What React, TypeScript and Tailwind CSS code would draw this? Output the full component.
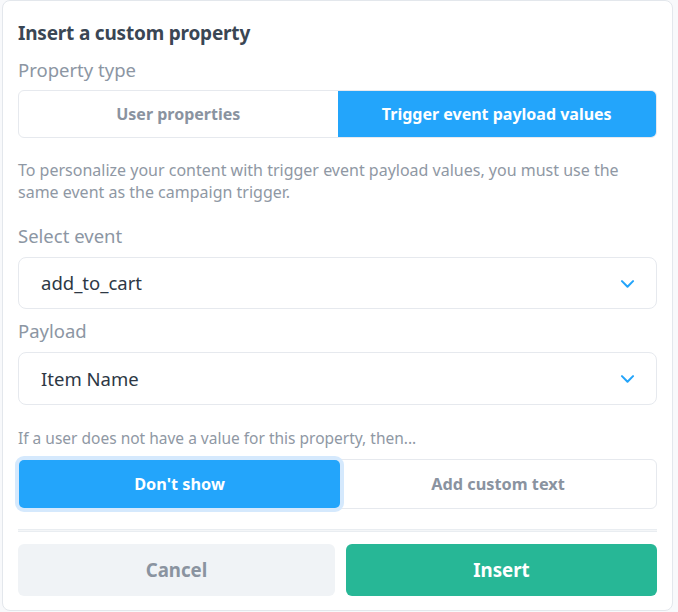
import React from "react";

const Chevron = () => (
  <svg width="19" height="19" viewBox="0 0 24 24" fill="none" stroke="#23a4fa" strokeWidth="2.6" strokeLinecap="round" strokeLinejoin="round">
    <path d="M5 9l7 7 7-7" />
  </svg>
);

export default function App() {
  return (
    <div
      className="w-[678px] h-[612px] bg-[#f8f9fb] overflow-hidden"
      style={{ fontFamily: '"Noto Sans", "Open Sans", sans-serif' }}
    >
      <div className="ml-[2px] w-[671px] h-[611px] bg-white border border-[#e3e7ec] rounded-[8px] px-[15px] pt-[20px] flex flex-col">
        <h1 className="text-[19px] font-bold text-[#3a4654] leading-[24px] tracking-[-0.2px]">Insert a custom property</h1>
        <div className="mt-[13px] text-[18.5px] text-[#8c96a3] leading-[24px]">Property type</div>
        <div className="mt-[8px] flex h-[48px] rounded-[6px] border border-[#e6e9ee] overflow-hidden">
          <div className="flex-1 flex items-center justify-center text-[16px] font-bold text-[#8a93a0]">User properties</div>
          <div className="flex-1 flex items-center justify-center text-[16px] font-bold text-white bg-[#23a5fb]">Trigger event payload values</div>
        </div>
        <p className="mt-[21px] text-[16px] text-[#8f98a4] leading-[22px]">
          To personalize your content with trigger event payload values, you must use the same event as the campaign trigger.
        </p>
        <div className="mt-[21px] text-[18.5px] text-[#8c96a3] leading-[24px]">Select event</div>
        <div className="mt-[9px] h-[52px] rounded-[8px] border border-[#e6e9ee] flex items-center justify-between pl-[22px] pr-[19px]">
          <span className="text-[18.5px] text-[#2d3845]">add_to_cart</span>
          <Chevron />
        </div>
        <div className="mt-[10px] text-[18.5px] text-[#8c96a3] leading-[24px]">Payload</div>
        <div className="mt-[9px] h-[53px] rounded-[8px] border border-[#e6e9ee] flex items-center justify-between pl-[22px] pr-[19px]">
          <span className="text-[18.5px] text-[#2d3845]">Item Name</span>
          <Chevron />
        </div>
        <div className="mt-[23px] text-[15.5px] text-[#8f98a4] leading-[20px]">If a user does not have a value for this property, then...</div>
        <div className="mt-[11px] flex h-[50px] rounded-[6px] border border-[#e6e9ee]">
          <div className="w-[321px] flex items-center justify-center text-[16.3px] font-bold text-white bg-[#23a5fb] rounded-[5px] ring-[4px] ring-[#d5e9fd]">Don't show</div>
          <div className="flex-1 flex items-center justify-center text-[16.3px] font-bold text-[#8a93a0]">Add custom text</div>
        </div>
        <div className="mt-[20px] h-[3px] border-t border-b border-[#e9edf1] bg-[#f4f6f8]" />
        <div className="mt-[12px] flex gap-[11px]">
          <button className="w-[317px] h-[52px] rounded-[6px] bg-[#f0f3f6] text-[18.7px] font-bold text-[#8a93a0]">Cancel</button>
          <button className="flex-1 h-[52px] rounded-[6px] bg-[#27b796] text-[18.7px] font-bold text-white">Insert</button>
        </div>
      </div>
    </div>
  );
}
